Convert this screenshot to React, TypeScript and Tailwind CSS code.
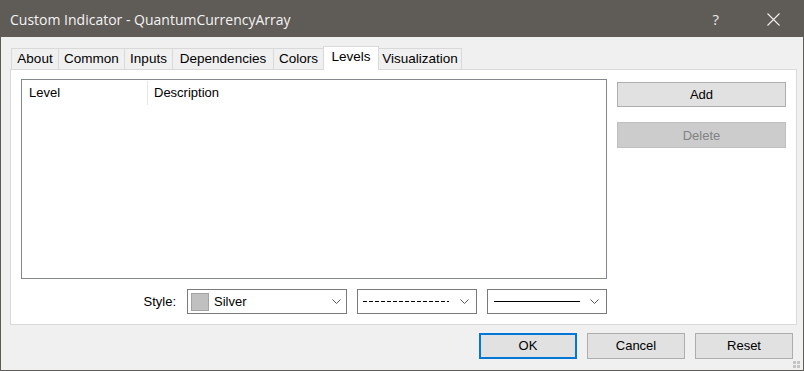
import React from "react";

const UI = { fontFamily: '"Liberation Sans", Arial, sans-serif' };

function Chevron() {
  return (
    <svg width="9" height="5" viewBox="0 0 9 5" className="shrink-0">
      <path d="M0.5 0.5 L4.5 4.5 L8.5 0.5" fill="none" stroke="#5a5a5a" strokeWidth="1" />
    </svg>
  );
}

const tabs = [
  { label: "About", w: "w-[48px]" },
  { label: "Common", w: "w-[66px]" },
  { label: "Inputs", w: "w-[48px]" },
  { label: "Dependencies", w: "w-[101px]" },
  { label: "Colors", w: "w-[50px]" },
  { label: "Levels", w: "w-[56px]", active: true },
  { label: "Visualization", w: "w-[83px]" },
];

export default function App() {
  return (
    <div
      className="relative w-[804px] h-[371px] bg-[#5f5b57] p-px flex flex-col text-[13px] text-black"
      style={UI}
    >
      {/* Title bar */}
      <div className="h-[36px] flex items-center pl-[9px] pr-[23px] text-white">
        <span
          className="text-[14px] text-[#f4f4f4] flex-1"
          style={{ fontFamily: '"Open Sans", "Noto Sans", sans-serif' }}
        >
          Custom Indicator - QuantumCurrencyArray
        </span>
        <span
          className="text-[15px] text-[#eaeaea] mr-[48px]"
          style={{ fontFamily: '"Open Sans", "Noto Sans", sans-serif' }}
        >
          ?
        </span>
        <svg width="13" height="13" viewBox="0 0 13 13">
          <path d="M0.5 0.5 L12.5 12.5 M12.5 0.5 L0.5 12.5" stroke="#f0f0f0" strokeWidth="1.1" fill="none" />
        </svg>
      </div>

      {/* Body */}
      <div className="flex-1 bg-[#f0f0f0] flex flex-col pl-[9px] pt-[9px]">
        {/* Tabs */}
        <div className="h-[23px] flex items-end pl-px text-[13.5px]">
          {tabs.map((t, i) =>
            t.active ? (
              <div
                key={t.label}
                className={`${t.w} h-[24px] -mb-px -ml-px relative z-10 bg-white border border-b-0 border-[#d9d9d9] flex items-center justify-center pb-[2px]`}
              >
                {t.label}
              </div>
            ) : (
              <div
                key={t.label}
                className={`${t.w} h-[21px] bg-[#f0f0f0] border-t border-r border-[#d9d9d9] ${i === 0 ? "border-l" : ""} flex items-center justify-center pt-px text-[#000]`}
              >
                {t.label}
              </div>
            )
          )}
        </div>

        {/* Panel */}
        <div className="w-[787px] h-[256px] bg-white border border-[#d9d9d9] flex gap-[10px] pt-[9px] px-[10px] pb-[10px]">
          <div className="w-[586px] flex flex-col">
            <div className="h-[200px] border border-[#828790] bg-white">
              <div className="h-[24px] flex">
                <div className="w-[125px] pl-[7px] pt-[2px] flex items-center">Level</div>
                <div className="mt-px w-px h-[24px] bg-[#e5e5e5]" />
                <div className="pl-[6px] pt-[2px] flex items-center">Description</div>
              </div>
            </div>
            <div className="mt-[10px] h-[25px] flex items-center justify-end gap-[10px]">
              <span className="mr-px">Style:</span>
              <div className="w-[160px] h-[25px] border border-[#7a7a7a] bg-white flex items-center pl-[3px] pr-[5px]">
                <div className="w-[18px] h-[18px] bg-[#c0c0c0] border border-[#a3a3a3]" />
                <span className="ml-[5px] flex-1">Silver</span>
                <Chevron />
              </div>
              <div className="w-[120px] h-[25px] border border-[#7a7a7a] bg-white flex items-center pl-[5px] pr-[7px]">
                <svg width="87" height="3" className="flex-1">
                  <line x1="0" y1="1.5" x2="86" y2="1.5" stroke="#000" strokeWidth="1" strokeDasharray="4 2" />
                </svg>
                <Chevron />
              </div>
              <div className="w-[120px] h-[25px] border border-[#7a7a7a] bg-white flex items-center pl-[6px] pr-[7px]">
                <div className="flex-1 flex items-center">
                  <div className="w-[86px] h-px bg-black" />
                </div>
                <Chevron />
              </div>
            </div>
          </div>
          <div className="w-[169px] flex flex-col pt-[3px]">
            <div className="h-[25px] bg-[#e1e1e1] border border-[#adadad] flex items-center justify-center pt-px">
              Add
            </div>
            <div className="mt-[15px] h-[26px] bg-[#cccccc] border border-[#bfbfbf] flex items-center justify-center pt-px text-[#838383]">
              Delete
            </div>
          </div>
        </div>

        {/* Buttons */}
        <div className="w-[787px] mt-[8px] flex justify-end gap-[10px] pr-[4px]">
          <div className="w-[98px] h-[26px] bg-[#e1e1e1] border-2 border-[#0078d7] flex items-center justify-center">
            OK
          </div>
          <div className="w-[98px] h-[26px] bg-[#e1e1e1] border border-[#adadad] flex items-center justify-center">
            Cancel
          </div>
          <div className="w-[98px] h-[26px] bg-[#e1e1e1] border border-[#adadad] flex items-center justify-center">
            Reset
          </div>
        </div>
      </div>

      {/* Resize grip */}
      <div className="absolute right-[4px] bottom-[3px] grid grid-cols-2 gap-px">
        <div className="w-[3px] h-[3px] bg-[#c4c4c4]" />
        <div className="w-[3px] h-[3px] bg-[#c4c4c4]" />
        <div className="w-[3px] h-[3px] bg-[#c4c4c4]" />
        <div className="w-[3px] h-[3px] bg-[#c4c4c4]" />
      </div>
    </div>
  );
}
